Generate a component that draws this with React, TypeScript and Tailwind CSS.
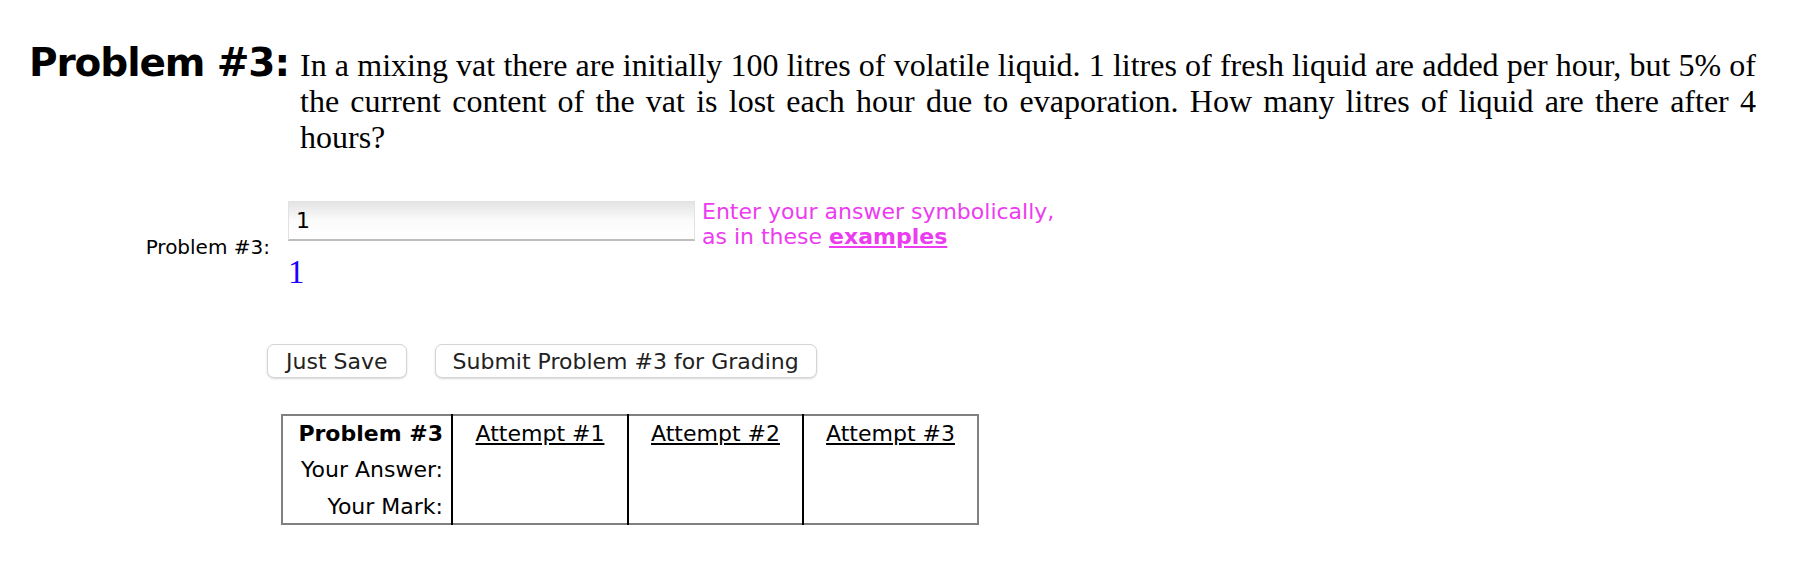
const sans = { fontFamily: '"DejaVu Sans", Verdana, sans-serif' };

const ProblemText = () => (
  <div className="flex items-baseline pt-[40px]">
    <div
      className="w-[300px] shrink-0 whitespace-nowrap pl-[29px] text-[39px] font-bold leading-[46px] tracking-[-1.1px] text-black"
      style={sans}
    >
      Problem #3:
    </div>
    <p className="w-[1456px] text-justify font-['Liberation_Serif',serif] text-[32px] leading-[36px] text-black">
      In a mixing vat there are initially 100 litres of volatile liquid. 1 litres of fresh liquid are added per hour, but 5% of
      the current content of the vat is lost each hour due to evaporation. How many litres of liquid are there after 4 hours?
    </p>
  </div>
);

const AnswerRow = () => (
  <div className="mt-[46px] flex items-center" style={sans}>
    <div className="w-[272px] shrink-0 pr-[2px] text-right text-[20px] text-black">Problem #3:</div>
    <div className="ml-[16px] flex flex-col">
      <div className="flex items-start">
        <div className="flex h-[40px] w-[407px] items-center border border-[#e2e2e2] border-b-2 border-b-[#bdbdbd] bg-gradient-to-b from-[#e4e4e4] via-[#fbfbfb] to-white pl-[7px] text-[22px] text-black">
          1
        </div>
        <div className="-mt-[2px] ml-[7px] text-[22px] leading-[25px] text-[#ec3cf0]">
          <div>Enter your answer symbolically,</div>
          <div>
            as in these <a className="font-bold underline">examples</a>
          </div>
        </div>
      </div>
      <div className="mt-[3px] font-['Liberation_Serif',serif] text-[33px] leading-[40px] text-[#1a00ff]">1</div>
    </div>
  </div>
);

const Buttons = () => (
  <div className="mt-[52px] flex gap-[28px] pl-[267px]" style={sans}>
    <button className="h-[34px] rounded-[7px] border border-[#d4d4d4] bg-white px-[18px] text-[22px] text-[#222] shadow-[0_1px_2px_rgba(0,0,0,0.15)]">
      Just Save
    </button>
    <button className="h-[34px] rounded-[7px] border border-[#d4d4d4] bg-white px-[17px] text-[22px] text-[#222] shadow-[0_1px_2px_rgba(0,0,0,0.15)]">
      Submit Problem #3 for Grading
    </button>
  </div>
);

const AttemptTable = () => (
  <div className="mt-[36px] pl-[281px]" style={sans}>
    <table className="border-collapse border-2 border-[#808080] text-[22px] text-black">
      <tbody>
        <tr className="h-[35px]">
          <th className="w-[170px] pr-[8px] text-right font-bold">Problem #3</th>
          <td className="w-[176px] border-l-2 border-black text-center underline">Attempt #1</td>
          <td className="w-[175px] border-l-2 border-black text-center underline">Attempt #2</td>
          <td className="w-[175px] border-l-2 border-black text-center underline">Attempt #3</td>
        </tr>
        <tr className="h-[39px]">
          <td className="pr-[8px] text-right">Your Answer:</td>
          <td className="border-l-2 border-black"></td>
          <td className="border-l-2 border-black"></td>
          <td className="border-l-2 border-black"></td>
        </tr>
        <tr className="h-[35px]">
          <td className="pr-[8px] text-right">Your Mark:</td>
          <td className="border-l-2 border-black"></td>
          <td className="border-l-2 border-black"></td>
          <td className="border-l-2 border-black"></td>
        </tr>
      </tbody>
    </table>
  </div>
);

export default function App() {
  return (
    <div className="min-h-[568px] w-[1802px] bg-white">
      <ProblemText />
      <AnswerRow />
      <Buttons />
      <AttemptTable />
    </div>
  );
}
